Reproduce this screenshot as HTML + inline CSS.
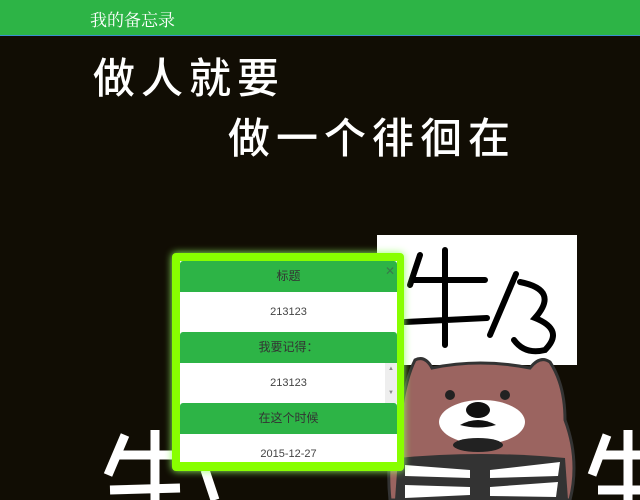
<!DOCTYPE html>
<html><head><meta charset="utf-8"><style>
*{margin:0;padding:0;box-sizing:border-box}
body{width:640px;height:500px;overflow:hidden;background:#110d04;position:relative;font-family:"Liberation Sans","Noto Sans CJK SC",sans-serif}
.hdr{position:absolute;left:0;top:0;width:640px;height:36px;background:#2db446;border-bottom:1px solid #3a8fd0}
.hdr span{position:absolute;left:90px;top:6px;color:#fff;font-size:17px;font-family:"Liberation Serif","Noto Serif CJK SC",serif}
.big{position:absolute;color:#fff;font-family:"Noto Sans CJK SC",sans-serif;font-size:42px;letter-spacing:6px;line-height:1;font-weight:500}
.modal{position:absolute;left:172px;top:253px;width:232px;height:218px;background:#88ff00;border-radius:4px;box-shadow:0 0 8px #9f6}
.inner{position:absolute;left:8px;top:8px;width:217px;height:201px;overflow:hidden;background:#fff}
.g{height:31px;background:#2db446;color:#333;font-size:12px;text-align:center;line-height:31px;border-radius:3px 3px 0 0}
.w{height:40px;background:#fff;color:#444;font-size:11px;text-align:center;line-height:40px;position:relative}
.x{position:absolute;right:2px;top:3px;color:#3a7a4a;font-size:12px}
.sb{position:absolute;right:0;top:0;width:12px;height:40px;background:#eee;color:#888;font-size:6px;text-align:center;line-height:12px}
</style></head><body>
<div class="hdr"><span>我的备忘录</span></div>
<div class="big" style="left:93px;top:55px">做人就要</div>
<div class="big" style="left:228px;top:115px">做一个徘徊在</div>
<svg style="position:absolute;left:0;top:0" width="640" height="500">
<rect x="377" y="235" width="200" height="130" fill="#fff"/>
<g stroke="#000" stroke-width="6" fill="none" stroke-linecap="round">
<path d="M420 255 L410 285 M412 280 L485 280 M445 250 L445 345 M405 322 L487 318"/>
<path d="M516 274 L490 335 M520 282 Q560 290 535 318 Q565 330 545 350 Q525 355 514 340"/>
</g>
<path d="M390 500 Q385 450 400 420 Q405 380 415 360 Q425 355 432 368 Q480 358 530 368 Q540 355 550 362 Q565 385 565 420 Q580 460 570 500Z" fill="#9b6460" stroke="#333" stroke-width="3"/>
<ellipse cx="482" cy="422" rx="43" ry="22" fill="#fff"/>
<circle cx="450" cy="395" r="5" fill="#222"/><circle cx="505" cy="395" r="5" fill="#222"/>
<ellipse cx="478" cy="410" rx="12" ry="8" fill="#111"/>
<path d="M460 425 Q478 415 496 425 Q478 430 460 425Z" fill="#111"/>
<ellipse cx="478" cy="445" rx="25" ry="7" fill="#222"/>
<path d="M398 458 Q480 450 565 458 L568 500 L395 500Z" fill="#333"/>
<g fill="#fff"><path d="M405 465 L470 470 L470 478 L405 476Z"/><path d="M490 470 L560 462 L558 476 L490 478Z"/><path d="M405 485 L470 487 L470 495 L405 498Z"/><path d="M490 487 L558 482 L556 497 L490 496Z"/></g>
<g stroke="#fff" stroke-width="9" fill="none">
<path d="M125 435 L108 475 M118 455 L175 455 M155 430 L155 500 M110 490 L180 488"/>
<path d="M205 470 L215 500"/>
<path d="M607 435 L592 475 M600 455 L640 455 M628 430 L628 500 M598 490 L640 490"/>
</g>
</svg>
<div class="modal"><div class="inner">
<div class="g">标题</div>
<div class="w">213123</div>
<div class="g">我要记得：</div>
<div class="w">213123<div class="sb">▲<br><br>▼</div></div>
<div class="g">在这个时候</div>
<div class="w">2015-12-27</div>
<div class="x">✕</div>
</div></div>
</body></html>
